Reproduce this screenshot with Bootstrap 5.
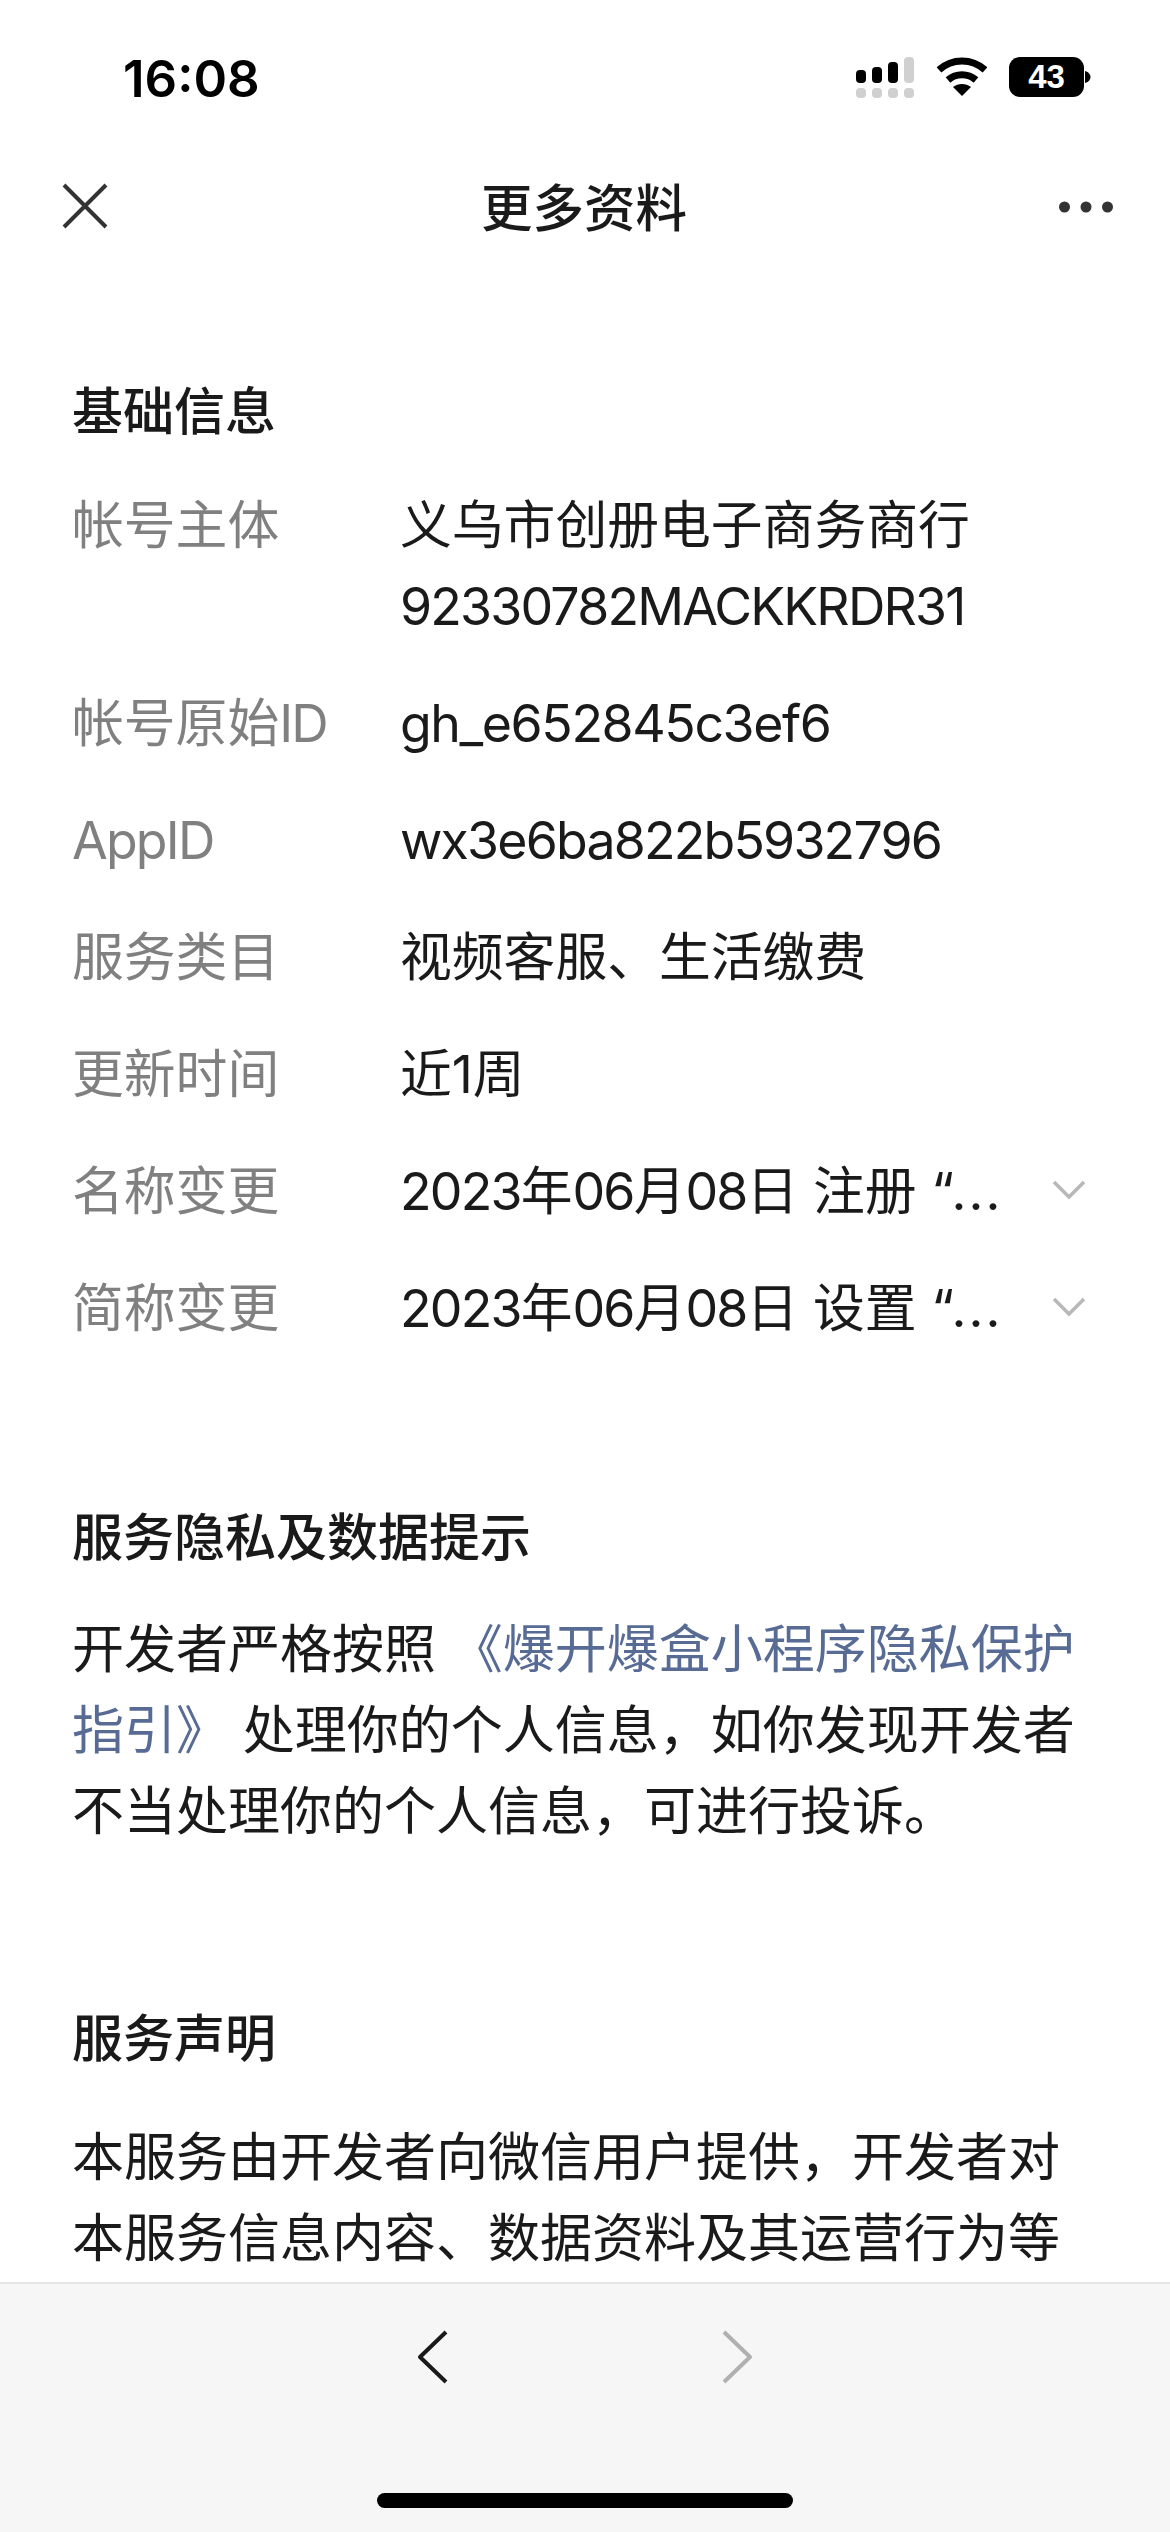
<!DOCTYPE html>
<html lang="zh"><head><meta charset="utf-8"><title>更多资料</title>
<link href="https://cdn.jsdelivr.net/npm/bootstrap@5.3.0/dist/css/bootstrap.min.css" rel="stylesheet">
<style>
html,body{height:2532px;overflow:hidden;background:#fff}
body{font-family:Inter,"Noto Sans CJK SC",sans-serif;color:#1a1a1a;font-size:51.8px;width:1170px}
.shell{height:2532px}
.statusbar{height:120px;padding:53px 79px 0 123px;color:#000}
.clock{font-family:Inter,"Liberation Sans",sans-serif;font-weight:600;font-size:51px;line-height:52px}
.sysicons{padding-top:4px}
.wifi{margin-left:21px}
.batt{width:75px;height:40px;background:#000;border-radius:11px;color:#fff;font:700 33px/40px "Liberation Sans",sans-serif;text-align:center;margin-left:22px}
.nub{margin-left:1px}
.topnav{height:174px;padding:60px 57px 0 61px}
.closeicon{margin-top:2px}
.navtitle{font-weight:500;font-size:51.5px;line-height:60px;margin-top:58px;margin-left:-1px}
.dotsicon{margin-top:19px}
.content{flex:1 1 auto;min-height:0;overflow:hidden;padding:0 72px}
.secthead{font-weight:500;font-size:51px;line-height:60px;margin:0}
.headone{margin-top:88px;margin-bottom:43px}
.headtwo{margin-top:159px;margin-bottom:41px}
.headthree{margin-top:157px;margin-bottom:48px}
.inforow{margin-bottom:36px;line-height:81px}
.lbl{width:328px;flex:none;color:#808080}
.val{flex:1 1 auto;min-width:0}
.latin{letter-spacing:-1.8px}
.latinloose{letter-spacing:-1.4px}
.dotted{letter-spacing:2px}
.para{line-height:81px;margin:0;font-size:52px}
.bluelink{color:#576b95;text-decoration:none}
.chev{flex:none;margin-right:12px;margin-top:-3px}
.bottombar{height:250px;flex:none;background:#f6f6f6;border-top:2px solid #e5e5e5}
.homebar{width:416px;height:15px;background:#000;border-radius:8px;bottom:24px;left:377px}
.arrows{height:146px}
.nextarrow{margin-left:272px}
</style></head>
<body>
<div class="shell d-flex flex-column position-relative">
  <div class="statusbar d-flex justify-content-between align-items-start">
    <span class="clock">16:08</span>
    <div class="sysicons d-flex align-items-start">
      <svg width="60" height="42" viewBox="0 0 60 42"><g fill="#000"><rect x="0" y="13" width="10" height="13" rx="4"/><rect x="16" y="10" width="10" height="16" rx="4"/><rect x="32" y="5" width="10" height="21" rx="4"/></g><g fill="#d0d0d0"><rect x="48" y="0" width="10" height="26" rx="4"/><rect x="0" y="31" width="10" height="10" rx="4"/><rect x="16" y="31" width="10" height="10" rx="4"/><rect x="32" y="31" width="10" height="10" rx="4"/><rect x="48" y="31" width="10" height="10" rx="4"/></g></svg>
      <svg class="wifi" width="50" height="40" viewBox="0 0 50 40"><g fill="none" stroke="#000" stroke-width="7"><path d="M2 13C15 1 35 1 48 13"/><path d="M11 23C19 16 31 16 39 23"/></g><path d="M16 30C21 26 29 26 34 30L25 39Z" fill="#000"/></svg>
      <div class="batt">43</div>
      <svg class="nub" width="6" height="40" viewBox="0 0 6 40"><path d="M0 14C4 15 5.500 18 5.500 20S4 25 0 26Z" fill="#000"/></svg>
    </div>
  </div>
  <div class="topnav d-flex justify-content-between align-items-start position-relative">
    <svg class="closeicon" width="48" height="48" viewBox="0 0 48 48"><path d="M3 3 45 45M45 3 3 45" stroke="#333" stroke-width="4" fill="none"/></svg>
    <div class="navtitle position-absolute top-0 start-50 translate-middle-x">更多资料</div>
    <svg class="dotsicon" width="54" height="16" viewBox="0 0 54 16"><g fill="#333"><circle cx="5.500" cy="8" r="5.500"/><circle cx="27" cy="8" r="5.500"/><circle cx="48.500" cy="8" r="5.500"/></g></svg>
  </div>
  <div class="content">
    <h2 class="secthead headone">基础信息</h2>
    <div class="inforow d-flex"><div class="lbl">帐号主体</div><div class="val">义乌市创册电子商务商行<br><span class="latin">92330782MACKKRDR31</span></div></div>
    <div class="inforow d-flex"><div class="lbl">帐号原始<span class="latin">ID</span></div><div class="val latinloose">gh_e652845c3ef6</div></div>
    <div class="inforow d-flex"><div class="lbl latin">AppID</div><div class="val latin">wx3e6ba822b5932796</div></div>
    <div class="inforow d-flex"><div class="lbl">服务类目</div><div class="val">视频客服、生活缴费</div></div>
    <div class="inforow d-flex"><div class="lbl">更新时间</div><div class="val">近1周</div></div>
    <div class="inforow d-flex align-items-center"><div class="lbl">名称变更</div><div class="val"><span class="latin">2023</span>年<span class="latin">06</span>月<span class="latin">08</span>日 注册 <span class="dotted">“...</span></div>
      <svg class="chev" width="34" height="20" viewBox="0 0 34 20"><path d="M2 2 17 17 32 2" fill="none" stroke="#b8b8b8" stroke-width="3.500"/></svg></div>
    <div class="inforow d-flex align-items-center"><div class="lbl">简称变更</div><div class="val"><span class="latin">2023</span>年<span class="latin">06</span>月<span class="latin">08</span>日 设置 <span class="dotted">“...</span></div>
      <svg class="chev" width="34" height="20" viewBox="0 0 34 20"><path d="M2 2 17 17 32 2" fill="none" stroke="#b8b8b8" stroke-width="3.500"/></svg></div>
    <h2 class="secthead headtwo">服务隐私及数据提示</h2>
    <p class="para">开发者严格按照 <a class="bluelink" href="#">《爆开爆盒小程序隐私保护指引》</a> 处理你的个人信息，如你发现开发者不当处理你的个人信息，可进行投诉。</p>
    <h2 class="secthead headthree">服务声明</h2>
    <p class="para">本服务由开发者向微信用户提供，开发者对本服务信息内容、数据资料及其运营行为等</p>
  </div>
  <div class="bottombar position-relative">
    <div class="arrows d-flex justify-content-center align-items-center">
      <svg width="32" height="54" viewBox="0 0 32 54"><path d="M29 2 3 27 29 52" fill="none" stroke="#1a1a1a" stroke-width="4" stroke-linejoin="round"/></svg>
      <svg class="nextarrow" width="32" height="54" viewBox="0 0 32 54"><path d="M3 2 29 27 3 52" fill="none" stroke="#b0b0b0" stroke-width="4" stroke-linejoin="round"/></svg>
    </div>
    <div class="homebar position-absolute"></div>
  </div>
</div>
<script src="https://cdn.jsdelivr.net/npm/bootstrap@5.3.0/dist/js/bootstrap.bundle.min.js"></script>
</body></html>
